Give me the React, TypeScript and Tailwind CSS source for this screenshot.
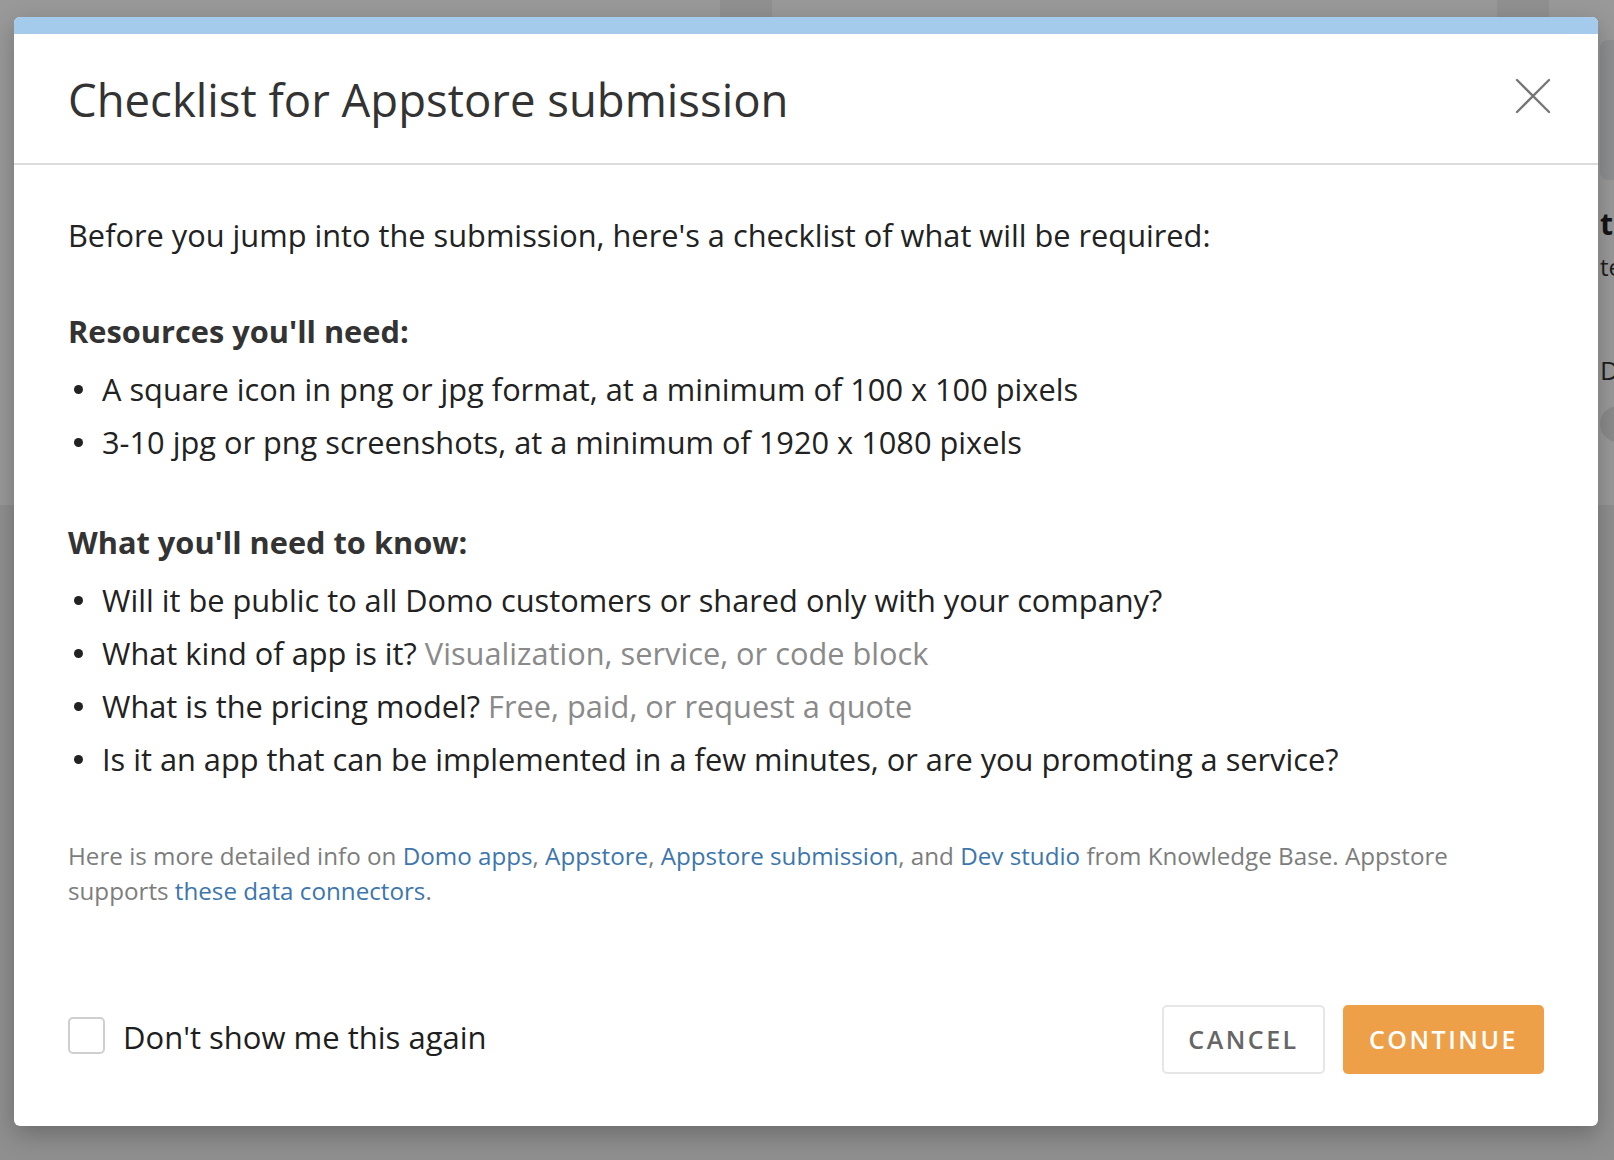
import React from 'react';

const font = { fontFamily: '"Open Sans", "Noto Sans", sans-serif' };

const Bullet: React.FC<{ children: React.ReactNode }> = ({ children }) => (
  <li className="flex items-center leading-[53px]">
    <span className="w-[34px] flex items-center pl-[6px]">
      <span className="block w-[9px] h-[9px] rounded-full bg-[#222]" />
    </span>
    <span>{children}</span>
  </li>
);

const Muted: React.FC<{ children: React.ReactNode }> = ({ children }) => (
  <span className="text-[#8a8a8a]">{children}</span>
);

const Link: React.FC<{ children: React.ReactNode }> = ({ children }) => (
  <a href="#" className="text-[#3d76ad]">{children}</a>
);

// dimmed page sitting behind the dialog
const PageBehind = () => (
  <div className="absolute inset-0 flex flex-col">
    <div className="h-[505px] bg-white flex">
      <div className="w-[720px]" />
      <div className="w-[52px] h-[18px] bg-[#f0f0f0]" />
      <div className="w-[725px]" />
      <div className="w-[52px] h-[18px] bg-[#f0f0f0]" />
      <div className="flex-1" />
      <div className="w-[14px] shrink-0 overflow-hidden pt-[40px] flex flex-col">
        <div className="h-[140px] w-[40px] rounded-[8px] bg-[#eceff2]" />
        <div className="mt-[26px] text-[30px] leading-[36px] font-bold text-[#222] whitespace-nowrap">title</div>
        <div className="mt-[10px] text-[24px] leading-[30px] text-[#333] whitespace-nowrap">text</div>
        <div className="mt-[72px] text-[26px] leading-[32px] text-[#333] whitespace-nowrap">Details</div>
        <div className="mt-[20px] w-[36px] h-[36px] rounded-full bg-[#e8e8e8]" />
      </div>
    </div>
    <div className="flex-1 bg-[#efefef]" />
    <div className="absolute inset-0 bg-black/40" />
  </div>
);

export default function App() {
  return (
    <div className="relative w-[1614px] h-[1160px] overflow-hidden" style={font}>
      <PageBehind />

      <div className="absolute left-[14px] top-[17px] w-[1584px] h-[1109px] bg-white rounded-[6px] overflow-hidden shadow-[0_8px_24px_rgba(0,0,0,0.25)] flex flex-col">
        <div className="h-[17px] bg-[#a4caec] shrink-0" />

        <div className="h-[131px] shrink-0 flex items-center justify-between pl-[54px] pr-[46px] border-b-2 border-[#dcdcdc]">
          <h1 className="text-[45.5px] leading-[52px] text-[#333] font-normal">Checklist for Appstore submission</h1>
          <button className="w-[38px] h-[38px] mb-[6px] flex items-center justify-center text-[#777]">
            <svg width="36" height="36" viewBox="0 0 36 36" fill="none" stroke="currentColor" strokeWidth="2.4" strokeLinecap="round">
              <path d="M2 2 L34 34 M34 2 L2 34" />
            </svg>
          </button>
        </div>

        <div className="flex-1 flex flex-col px-[54px] pt-[44px] pb-[52px] text-[30.75px] text-[#222]">
          <p className="leading-[52px]">Before you jump into the submission, here's a checklist of what will be required:</p>

          <h2 className="mt-[50px] leading-[40px] font-bold text-[#333]">Resources you'll need:</h2>
          <ul className="mt-[12px]">
            <Bullet>A square icon in png or jpg format, at a minimum of 100 x 100 pixels</Bullet>
            <Bullet>3-10 jpg or png screenshots, at a minimum of 1920 x 1080 pixels</Bullet>
          </ul>

          <h2 className="mt-[53px] leading-[40px] font-bold text-[#333]">What you'll need to know:</h2>
          <ul className="mt-[12px]">
            <Bullet>Will it be public to all Domo customers or shared only with your company?</Bullet>
            <Bullet>What kind of app is it? <Muted>Visualization, service, or code block</Muted></Bullet>
            <Bullet>What is the pricing model? <Muted>Free, paid, or request a quote</Muted></Bullet>
            <Bullet>Is it an app that can be implemented in a few minutes, or are you promoting a service?</Bullet>
          </ul>

          <p className="mt-[52px] text-[24.2px] leading-[35px] text-[#7d7d7d] max-w-[1420px]">
            Here is more detailed info on <Link>Domo apps</Link>, <Link>Appstore</Link>, <Link>Appstore submission</Link>, and{' '}
            <Link>Dev studio</Link> from Knowledge Base. Appstore supports <Link>these data connectors</Link>.
          </p>

          <div className="mt-auto flex items-center justify-between">
            <label className="flex items-center gap-[18px] mb-[5px] cursor-pointer">
              <span className="block w-[37px] h-[37px] -mt-[3px] rounded-[5px] border-2 border-[#cfcfcf] bg-white" />
              <span className="text-[31px] leading-[40px] text-[#1e1e1e]">Don't show me this again</span>
            </label>
            <div className="flex items-center gap-[18px]">
              <button className="w-[163px] h-[69px] rounded-[5px] border-2 border-[#e6e6e6] bg-white text-[25px] font-semibold tracking-[0.1em] text-[#666]">
                CANCEL
              </button>
              <button className="w-[201px] h-[69px] rounded-[5px] bg-[#eea048] text-[25px] font-semibold tracking-[0.1em] text-white">
                CONTINUE
              </button>
            </div>
          </div>
        </div>
      </div>
    </div>
  );
}
